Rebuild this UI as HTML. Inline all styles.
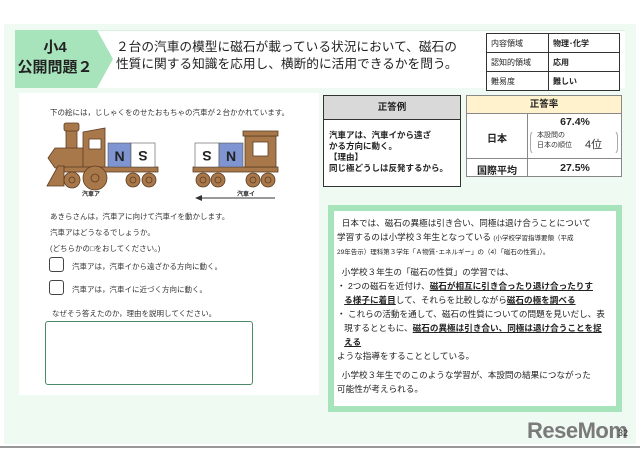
<!DOCTYPE html>
<html><head><meta charset="utf-8"><style>
*{margin:0;padding:0;box-sizing:border-box}
body{width:640px;height:454px;background:#fff;position:relative;overflow:hidden;font-family:"Liberation Sans","Noto Sans CJK JP",sans-serif;color:#222}
.a{position:absolute}
.slide{left:4px;top:24px;width:632px;height:420px;background:#effaf2}
.tb td{border:1px solid #333;font-size:8px;padding:0 4px;height:19px}
.bold{font-weight:bold}
.u{text-decoration:underline;font-weight:bold}
</style></head><body>
<div class="a slide"></div>
<div class="a" style="left:15px;top:30px;width:610px;height:58px;background:#fff;border-top:1px solid #d8f0df"></div>
<svg class="a" style="left:15px;top:30px" width="100" height="58"><polygon points="0,0 82,0 98,29 82,58 0,58" fill="#a7e3bb"/></svg>
<div class="a bold" style="left:15px;top:38px;width:80px;text-align:center;font-size:15px;line-height:20px;color:#222">小4<br>公開問題２</div>
<div class="a" style="left:116px;top:39px;font-size:12.7px;line-height:17px;color:#222;white-space:nowrap">２台の汽車の模型に磁石が載っている状況において、磁石の<br>性質に関する知識を応用し、横断的に活用できるかを問う。</div>
<table class="a tb" style="left:486px;top:33px;width:134px;border-collapse:collapse;background:#fff"><tr><td style="width:62px">内容領域</td><td class="bold">物理･化学</td></tr><tr><td>認知的領域</td><td class="bold">応用</td></tr><tr><td>難易度</td><td class="bold">難しい</td></tr></table>

<div class="a" style="left:19px;top:93px;width:300px;height:302px;background:#fff"></div>
<div class="a" style="left:50px;top:107px;font-size:7.5px;color:#333">下の絵には，じしゃくをのせたおもちゃの汽車が２台かかれています。</div>
<svg class="a" style="left:0;top:0" width="320" height="210">
<g fill="#a8774a" stroke="#5c3d22" stroke-width="0.8">
<rect x="66" y="130" width="11" height="20"/><rect x="64" y="123" width="15" height="8" rx="2"/>
<polygon points="55,148 84,148 84,168 55,168 48,158"/>
<polygon points="83,132 105,128 105,168 83,168"/>
<rect x="58" y="167" width="100" height="5"/>
<polygon points="47,186 58,166 64,166 64,186"/>
<circle cx="72" cy="180" r="8"/><circle cx="95" cy="178" r="12"/><circle cx="133" cy="180" r="7"/><circle cx="149" cy="180" r="7"/>
</g>
<g fill="none" stroke="#5c3d22" stroke-width="0.8"><circle cx="72" cy="180" r="3"/><circle cx="95" cy="178" r="4"/><circle cx="133" cy="180" r="3"/><circle cx="149" cy="180" r="3"/></g>
<rect x="89" y="139" width="12" height="10" fill="#fff" stroke="#5c3d22" stroke-width="0.8"/>
<rect x="108" y="143" width="23" height="24" fill="#7f95d1" stroke="#555" stroke-width="0.6"/>
<rect x="131" y="143" width="24" height="24" fill="#fff" stroke="#555" stroke-width="0.6"/>
<text x="119.5" y="161" font-size="14" font-weight="bold" text-anchor="middle" fill="#222">N</text>
<text x="143" y="161" font-size="14" font-weight="bold" text-anchor="middle" fill="#222" transform="rotate(180 143 156)">S</text>
<g fill="#a8774a" stroke="#5c3d22" stroke-width="0.8">
<rect x="193" y="167" width="85" height="5"/><rect x="245" y="136" width="31" height="31"/><rect x="243" y="131" width="35" height="5"/>
<circle cx="203" cy="180" r="7"/><circle cx="218" cy="180" r="7"/><circle cx="253" cy="180" r="7"/><circle cx="268" cy="180" r="7"/>
</g>
<g fill="none" stroke="#5c3d22" stroke-width="0.8"><circle cx="203" cy="180" r="3"/><circle cx="218" cy="180" r="3"/><circle cx="253" cy="180" r="3"/><circle cx="268" cy="180" r="3"/></g>
<rect x="253" y="142" width="15" height="14" fill="#fff" stroke="#5c3d22" stroke-width="0.8"/>
<rect x="195" y="143" width="24" height="24" fill="#fff" stroke="#555" stroke-width="0.6"/>
<rect x="219" y="143" width="24" height="24" fill="#7f95d1" stroke="#555" stroke-width="0.6"/>
<text x="207" y="161" font-size="14" font-weight="bold" text-anchor="middle" fill="#222" transform="rotate(180 207 156)">S</text>
<text x="231" y="161" font-size="14" font-weight="bold" text-anchor="middle" fill="#222">N</text>
<line x1="201" y1="198" x2="275" y2="198" stroke="#333" stroke-width="1"/>
<polygon points="195,198 202,195 202,201" fill="#333"/>
</svg>
<div class="a bold" style="left:82px;top:189px;font-size:6px">汽車ア</div>
<div class="a bold" style="left:237px;top:189px;font-size:6px">汽車イ</div>
<div class="a" style="left:50px;top:209px;font-size:7.5px;line-height:16px;color:#333">あきらさんは，汽車アに向けて汽車イを動かします。<br>汽車アはどうなるでしょうか。<br>(どちらかの□をおしてください。)</div>
<div class="a" style="left:49px;top:257px;width:15px;height:15px;border:1px solid #444;border-radius:3px"></div>
<div class="a" style="left:72px;top:261px;font-size:7.5px;color:#333">汽車アは，汽車イから遠ざかる方向に動く。</div>
<div class="a" style="left:49px;top:280px;width:15px;height:15px;border:1px solid #444;border-radius:3px"></div>
<div class="a" style="left:72px;top:284px;font-size:7.5px;color:#333">汽車アは，汽車イに近づく方向に動く。</div>
<div class="a" style="left:52px;top:308px;font-size:7.5px;color:#333">なぜそう答えたのか，理由を説明してください。</div>
<div class="a" style="left:45px;top:321px;width:208px;height:64px;border:1.5px solid #4a8a68;border-radius:3px;background:#fff"></div>

<div class="a" style="left:323px;top:95px;width:138px;height:92px;border:1px solid #333;background:#fff"></div>
<div class="a bold" style="left:324px;top:96px;width:136px;height:24px;background:#d9d9d9;border-bottom:1px solid #333;text-align:center;font-size:9.5px;line-height:24px">正答例</div>
<div class="a bold" style="left:329px;top:130px;font-size:8.5px;line-height:11px">汽車アは、汽車イから遠ざ<br>かる方向に動く。<br>【理由】<br>同じ極どうしは反発するから。</div>

<div class="a" style="left:466px;top:95px;width:156px;height:82px;border:1px solid #888;background:#fff"></div>
<div class="a bold" style="left:467px;top:96px;width:154px;height:18px;background:#fff2cc;border-bottom:1px solid #888;text-align:center;font-size:9.5px;line-height:18px">正答率</div>
<div class="a" style="left:527px;top:114px;width:1px;height:63px;background:#888"></div>
<div class="a" style="left:467px;top:158px;width:154px;height:1px;background:#888"></div>
<div class="a bold" style="left:467px;top:130px;width:60px;text-align:center;font-size:10px">日本</div>
<div class="a bold" style="left:467px;top:162px;width:60px;text-align:center;font-size:10px">国際平均</div>
<div class="a bold" style="left:528px;top:116px;width:94px;text-align:center;font-size:10.5px">67.4%</div>
<div class="a" style="left:530px;top:130px;width:88px;height:25px;border:1px solid #aaa;border-radius:6px;border-top-color:transparent;border-bottom-color:transparent"></div>
<div class="a" style="left:537px;top:131px;font-size:7px;line-height:10px;color:#333">本設問の<br>日本の順位</div>
<div class="a" style="left:585px;top:136px;font-size:11px;color:#333">4位</div>
<div class="a bold" style="left:528px;top:162px;width:94px;text-align:center;font-size:10.5px">27.5%</div>

<div class="a" style="left:328px;top:205px;width:294px;height:207px;border:6px solid #a7e3bb;background:#fff"></div>
<div class="a" style="left:337px;top:216px;width:284px;font-size:8.6px;line-height:14px;color:#222">
<div>&nbsp;&nbsp;日本では、磁石の異極は引き合い、同極は退け合うことについて</div>
<div>学習するのは小学校３年生となっている <span style="font-size:6.5px">(小学校学習指導要領（平成</span></div>
<div style="font-size:6.5px">29年告示）理科第３学年「Ａ物質･エネルギー」の（4）「磁石の性質」）。</div>
<div style="margin-top:5px">&nbsp;&nbsp;小学校３年生の「磁石の性質」の学習では、</div>
<div>・ 2つの磁石を近付け、<span class="u">磁石が相互に引き合ったり退け合ったりす</span></div>
<div>&nbsp;&nbsp;&nbsp;<span class="u">る様子に着目</span>して、それらを比較しながら<span class="u">磁石の極を調べる</span></div>
<div>・ これらの活動を通して、磁石の性質についての問題を見いだし、表</div>
<div>&nbsp;&nbsp;&nbsp;現するとともに、<span class="u">磁石の異極は引き合い、同極は退け合うことを捉</span></div>
<div>&nbsp;&nbsp;&nbsp;<span class="u">える</span></div>
<div>ような指導をすることとしている。</div>
<div style="margin-top:5px">&nbsp;&nbsp;小学校３年生でのこのような学習が、本設問の結果につながった</div>
<div>可能性が考えられる。</div>
</div>
<div class="a bold" style="left:527px;top:418px;font-size:22px;color:#7a7a7a;letter-spacing:-0.5px">ReseMom</div>
<div class="a" style="left:618px;top:428px;font-size:9px;color:#333">32</div>
<div class="a" style="left:0;top:446px;width:640px;height:2px;background:#999"></div>
</body></html>
